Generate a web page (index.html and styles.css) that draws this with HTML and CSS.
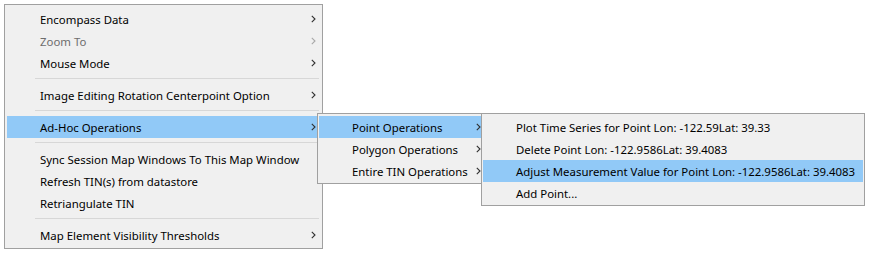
FILE: index.html
```html
<!DOCTYPE html>
<html>
<head>
<meta charset="utf-8">
<link rel="stylesheet" href="styles.css">
</head>
<body>
<div class="stage">
  <div class="menu main-menu">
    <div class="item"><span class="label">Encompass Data</span><svg class="chev" width="5" height="8" viewBox="0 0 5 8"><polyline points="0.8,0.8 4,4 0.8,7.2"/></svg></div>
    <div class="item disabled"><span class="label">Zoom To</span><svg class="chev" width="5" height="8" viewBox="0 0 5 8"><polyline points="0.8,0.8 4,4 0.8,7.2"/></svg></div>
    <div class="item"><span class="label">Mouse Mode</span><svg class="chev" width="5" height="8" viewBox="0 0 5 8"><polyline points="0.8,0.8 4,4 0.8,7.2"/></svg></div>
    <div class="sep"></div>
    <div class="item"><span class="label">Image Editing Rotation Centerpoint Option</span><svg class="chev" width="5" height="8" viewBox="0 0 5 8"><polyline points="0.8,0.8 4,4 0.8,7.2"/></svg></div>
    <div class="sep"></div>
    <div class="item active"><span class="label">Ad-Hoc Operations</span><svg class="chev" width="5" height="8" viewBox="0 0 5 8"><polyline points="0.8,0.8 4,4 0.8,7.2"/></svg></div>
    <div class="sep"></div>
    <div class="item"><span class="label">Sync Session Map Windows To This Map Window</span></div>
    <div class="item"><span class="label">Refresh TIN(s) from datastore</span></div>
    <div class="item"><span class="label">Retriangulate TIN</span></div>
    <div class="sep"></div>
    <div class="item"><span class="label">Map Element Visibility Thresholds</span><svg class="chev" width="5" height="8" viewBox="0 0 5 8"><polyline points="0.8,0.8 4,4 0.8,7.2"/></svg></div>
  </div>

  <div class="menu sub-menu-1">
    <div class="item active"><span class="label">Point Operations</span><svg class="chev" width="5" height="8" viewBox="0 0 5 8"><polyline points="0.8,0.8 4,4 0.8,7.2"/></svg></div>
    <div class="item"><span class="label">Polygon Operations</span><svg class="chev" width="5" height="8" viewBox="0 0 5 8"><polyline points="0.8,0.8 4,4 0.8,7.2"/></svg></div>
    <div class="item"><span class="label">Entire TIN Operations</span><svg class="chev" width="5" height="8" viewBox="0 0 5 8"><polyline points="0.8,0.8 4,4 0.8,7.2"/></svg></div>
  </div>

  <div class="menu sub-menu-2">
    <div class="item"><span class="label">Plot Time Series for Point Lon: -122.59Lat: 39.33</span></div>
    <div class="item"><span class="label">Delete Point Lon: -122.9586Lat: 39.4083</span></div>
    <div class="item active"><span class="label">Adjust Measurement Value for Point Lon: -122.9586Lat: 39.4083</span></div>
    <div class="item"><span class="label">Add Point...</span></div>
  </div>
</div>
</body>
</html>
```

FILE: styles.css
```css
html, body {
  margin: 0;
  padding: 0;
  background: #ffffff;
}

.stage {
  position: relative;
  width: 875px;
  height: 253px;
  font-family: "Noto Sans", "Open Sans", sans-serif;
  font-size: 11.4px;
  color: #000000;
}

.menu {
  background: #f0f0f0;
  border: 1px solid #a0a0a0;
  box-sizing: border-box;
}

.main-menu {
  position: absolute;
  left: 4px;
  top: 4px;
  width: 319px;
  padding: 3px 2px 2px 2px;
  z-index: 1;
}

.sub-menu-1 {
  position: absolute;
  left: 317px;
  top: 113px;
  width: 170px;
  padding: 2px 1px 1px 1px;
  z-index: 2;
}

.sub-menu-2 {
  position: absolute;
  left: 481px;
  top: 113px;
  width: 384px;
  padding: 2px 1px 1px 1px;
  z-index: 3;
}

.item {
  display: flex;
  align-items: center;
  height: 22px;
  padding-left: 33px;
  white-space: nowrap;
}

.item .label {
  flex: 1;
  line-height: 20px;
  padding-top: 2px;
}

.item.active {
  background: #91c9f7;
}

.item.disabled {
  color: #6d6d6d;
}

.chev {
  flex: none;
  margin-right: 4px;
  fill: none;
  stroke: #303030;
  stroke-width: 1.1;
}

.item.disabled .chev {
  stroke: #a8a8a8;
}

.sep {
  height: 1px;
  margin: 4px 1px 5px 28px;
  background: #d7d7d7;
}
```
